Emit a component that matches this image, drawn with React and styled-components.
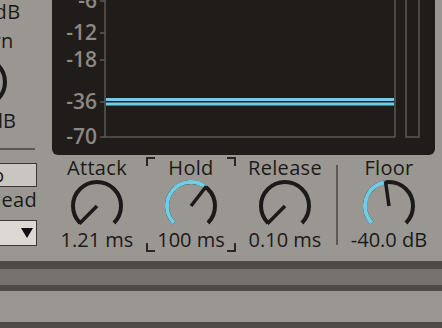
import React from "react";
import styled, { createGlobalStyle } from "styled-components";

const GlobalStyle = createGlobalStyle`
  html, body {
    margin: 0;
    padding: 0;
    background: #9a9792;
  }
  body {
    font-family: "Open Sans", "Liberation Sans", sans-serif;
  }
`;

const CYAN = "#6fcde5";
const INK = "#1c1a18";

const Page = styled.div`
  width: 442px;
  height: 328px;
  overflow: hidden;
  background: #9a9792;
  color: ${INK};
  display: flex;
  flex-direction: column;
`;

const Main = styled.div`
  display: flex;
  height: 261px;
  flex-shrink: 0;
`;

const LeftCol = styled.div`
  width: 132px;
  margin-left: -80px;
  flex-shrink: 0;
  display: flex;
  flex-direction: column;
  padding-top: 2px;
  box-sizing: border-box;
`;

const KnobStack = styled.div`
  width: 122px;
  display: flex;
  flex-direction: column;
  align-items: center;
`;

const Label = styled.div`
  font-size: 20px;
  font-weight: 500;
  line-height: 20px;
  letter-spacing: 0.3px;
  white-space: nowrap;
  margin-top: ${(p) => p.$mt || 0}px;
  text-align: ${(p) => p.$align || "center"};
  padding-right: ${(p) => p.$pr || 0}px;
`;

const Value = styled.div`
  font-size: 20px;
  font-weight: 500;
  line-height: 17px;
  white-space: nowrap;
  margin-top: ${(p) => p.$mt || 0}px;
`;

const Divider = styled.div`
  height: 2px;
  width: 115px;
  margin-top: 19px;
  background: #5a5652;
`;

const FlipButton = styled.div`
  margin: 13px 15px 0 20px;
  height: 24px;
  box-sizing: border-box;
  background: #c9c6c1;
  border: 1.5px solid #3a3734;
  display: flex;
  align-items: center;
  justify-content: center;
  font-size: 19px;
  font-weight: 500;
`;

const Dropdown = styled.div`
  margin: 10px 15px 0 15px;
  height: 26px;
  box-sizing: border-box;
  background: #dcd9d5;
  border: 1.5px solid #3a3734;
  display: flex;
  align-items: center;
  justify-content: space-between;
  padding: 0 3px 0 8px;
  font-size: 19px;
  font-weight: 500;
`;

const Arrow = styled.span`
  width: 0;
  height: 0;
  border-left: 6px solid transparent;
  border-right: 6px solid transparent;
  border-top: 10px solid #111;
`;

const RightCol = styled.div`
  display: flex;
  flex-direction: column;
  width: 383px;
  flex-shrink: 0;
`;

const Display = styled.div`
  margin-top: -14px;
  height: 169px;
  background: #1f1c1a;
  border-radius: 0 0 6px 6px;
  overflow: hidden;
`;

const KnobRow = styled.div`
  display: flex;
  height: 100px;
  gap: 4px;
`;

const KnobCol = styled.div`
  position: relative;
  width: 90px;
  display: flex;
  flex-direction: column;
  align-items: center;
  padding-top: 3px;
  box-sizing: border-box;
`;

const Corner = styled.span`
  position: absolute;
  width: 7px;
  height: 7px;
  border-color: #2a2623;
  border-style: solid;
  border-width: 0;
  ${(p) => (p.$v === "top" ? "top: 2px; border-top-width: 2px;" : "bottom: 3px; border-bottom-width: 2px;")}
  ${(p) => (p.$h === "left" ? "left: 0; border-left-width: 2px;" : "right: 0; border-right-width: 2px;")}
`;

const Separator = styled.div`
  width: 2px;
  height: 80px;
  align-self: center;
  background: #5d5955;
  margin: 0 2px;
`;

const Band = styled.div`
  flex-shrink: 0;
  height: ${(p) => p.$h}px;
  background: ${(p) => ({ dark: "#4e4a46", mid: "#75716c", light: "#9a9792" }[p.$tone])};
`;

const pt = (c, r, deg) => {
  const a = (deg * Math.PI) / 180;
  return [c + r * Math.cos(a), c - r * Math.sin(a)];
};

const arc = (c, r, from, to) => {
  const [x0, y0] = pt(c, r, from);
  const [x1, y1] = pt(c, r, to);
  const large = from - to > 180 ? 1 : 0;
  return `M ${x0} ${y0} A ${r} ${r} 0 ${large} 1 ${x1} ${y1}`;
};

const Knob = ({ value, fill }) => {
  const c = 28;
  const r = 24;
  const angle = 225 - 270 * value;
  const [nx, ny] = pt(c, r + 1, angle);
  return (
    <svg width="56" height="56" viewBox="0 0 56 56">
      <path d={arc(c, r, 225, -45)} fill="none" stroke={INK} strokeWidth="4" />
      {fill && <path d={arc(c, r, 225, angle)} fill="none" stroke={CYAN} strokeWidth="4" />}
      <line x1={c} y1={c} x2={nx} y2={ny} stroke={INK} strokeWidth="3.5" />
    </svg>
  );
};

const ticks = [
  { label: "-6", y: 15 },
  { label: "-12", y: 47 },
  { label: "-18", y: 74 },
  { label: "-36", y: 116 },
  { label: "-70", y: 151 },
];

const GateGraph = () => (
  <svg width="383" height="169" viewBox="0 0 383 169">
    <g stroke="#5b5855" strokeWidth="1.5" fill="none">
      <line x1="53" y1="0" x2="53" y2="151" />
      <line x1="53" y1="151" x2="343" y2="151" />
      <line x1="343" y1="0" x2="343" y2="151" />
      <rect x="354" y="-2" width="13" height="153" />
      {ticks.map((t) => (
        <line key={t.label} x1="48" y1={t.y} x2="53" y2={t.y} />
      ))}
    </g>
    {ticks.map((t) => (
      <text
        key={t.label}
        x="45"
        y={t.y + 7.2}
        textAnchor="end"
        fill="#8c8884"
        fontSize="21"
        fontWeight="600"
        fontFamily='"Open Sans", sans-serif'
      >
        {t.label}
      </text>
    ))}
    <rect x="54" y="112" width="288" height="3" fill={CYAN} />
    <rect x="54" y="116.5" width="288" height="3" fill={CYAN} />
  </svg>
);

const knobs = [
  { name: "Attack", value: 0.0, text: "1.21 ms" },
  { name: "Hold", value: 0.64, text: "100 ms", fill: true, selected: true },
  { name: "Release", value: 0.0, text: "0.10 ms" },
];

const KnobUnit = ({ name, value, text, fill, selected }) => (
  <KnobCol>
    {selected && (
      <>
        <Corner $v="top" $h="left" />
        <Corner $v="top" $h="right" />
        <Corner $v="bottom" $h="left" />
        <Corner $v="bottom" $h="right" />
      </>
    )}
    <Label>{name}</Label>
    <Knob value={value} fill={fill} />
    <Value $mt={-3}>{text}</Value>
  </KnobCol>
);

export default function App() {
  return (
    <>
      <GlobalStyle />
      <Page>
        <Main>
          <LeftCol>
            <KnobStack>
              <Label>-36.0 dB</Label>
              <Label $mt={9}>Return</Label>
              <div style={{ marginTop: 3 }}>
                <Knob value={0.5} />
              </div>
              <Value $mt={-3}>0.00 dB</Value>
            </KnobStack>
            <Divider />
            <FlipButton>Flip</FlipButton>
            <Label $mt={3} $align="right" $pr={15}>
              Lookahead
            </Label>
            <Dropdown>
              <span>0 ms</span>
              <Arrow />
            </Dropdown>
          </LeftCol>
          <RightCol>
            <Display>
              <GateGraph />
            </Display>
            <KnobRow>
              {knobs.map((k) => (
                <KnobUnit key={k.name} {...k} />
              ))}
              <Separator />
              <KnobUnit name="Floor" value={0.47} text="-40.0 dB" fill />
            </KnobRow>
          </RightCol>
        </Main>
        <Band $tone="dark" $h={8} />
        <Band $tone="mid" $h={16} />
        <Band $tone="dark" $h={6} />
        <Band $tone="light" $h={31} />
        <Band $tone="dark" $h={8} />
      </Page>
    </>
  );
}
